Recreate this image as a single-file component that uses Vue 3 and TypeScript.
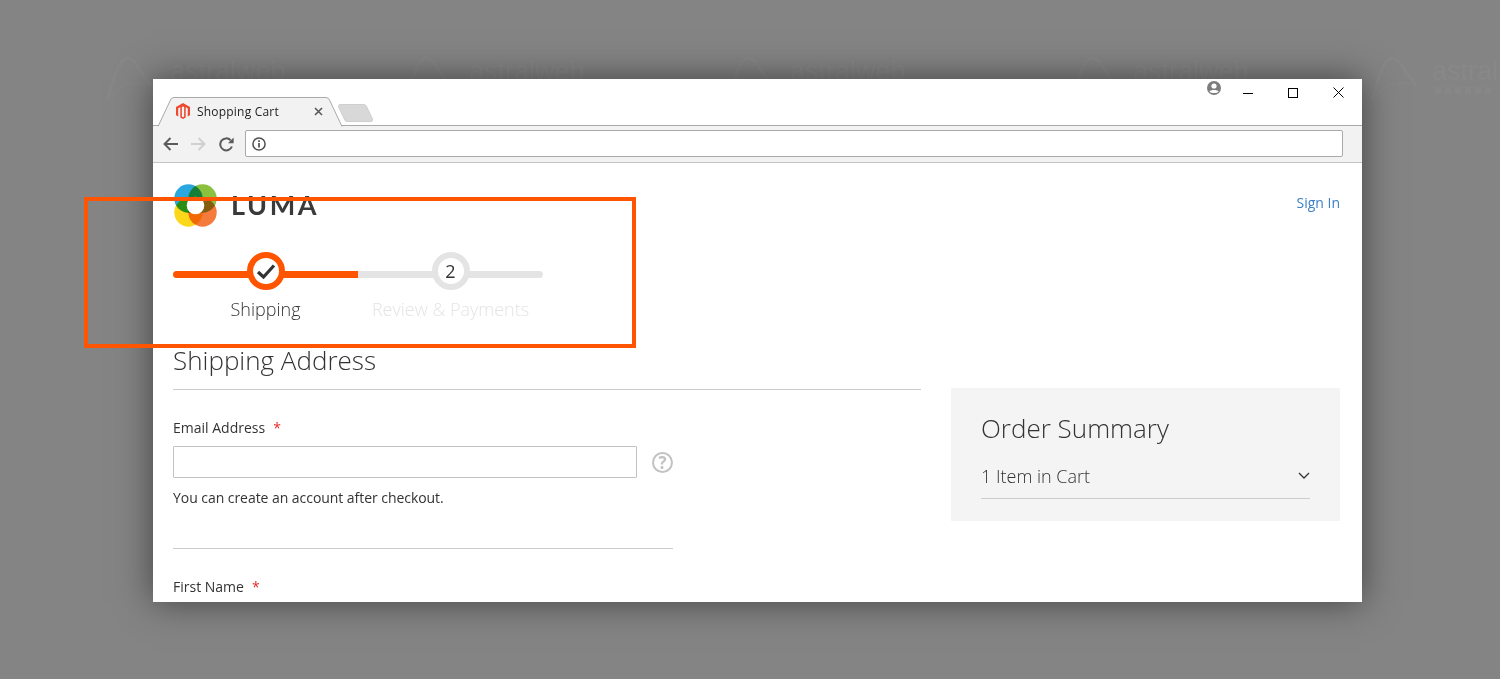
<script setup lang="ts">
const marks: { logo: number; text: number; label: string }[] = [
  { logo: 105, text: 170, label: 'astralweb' },
  { logo: 404, text: 469, label: 'astralweb' },
  { logo: 726, text: 790, label: 'astralweb' },
  { logo: 1070, text: 1133, label: 'astralweb' },
  { logo: 1370, text: 1432, label: 'astral' }
]
</script>

<template>
  <div class="page">
    <template v-for="m in marks" :key="m.text">
      <svg class="mark-logo" :style="{ left: m.logo + 'px' }" width="48" height="66" viewBox="0 0 48 66" fill="none">
        <path d="M2 50 C8 30 14 8 22 8 C30 8 36 24 46 35" stroke="#878787" stroke-width="3" />
        <path d="M4 50 C12 36 26 28 46 36" stroke="#868686" stroke-width="2" />
      </svg>
      <span class="mark-text" :style="{ left: m.text + 'px' }">{{ m.label }}</span>
    </template>
    <div class="mark-sub"></div>

    <section class="window">
      <header class="titlebar">
        <div class="tab">
          <svg class="tab-bg" width="186" height="30" viewBox="0 0 186 30">
            <path d="M0 29.5 L12 4 Q13 .5 16 .5 H168 Q171 .5 172 4 L184 29.5" fill="#f2f2f2" stroke="#a9a9a9" />
          </svg>
          <svg class="favicon" width="14" height="16" viewBox="0 0 15 17">
            <path d="M7.5 0 L15 4.3 V13 L12.6 14.3 V5.6 L10.4 4.4 V15.4 L7.5 17 L4.6 15.4 V4.4 L2.4 5.6 V14.3 L0 13 V4.3 Z M7.5 3.6 L6.3 4.3 V14.5 L7.5 15.2 L8.7 14.5 V4.3 Z" fill="#ec4b32" fill-rule="evenodd" />
          </svg>
          <span class="tab-title">Shopping Cart</span>
          <svg class="tab-close" width="9" height="9" viewBox="0 0 9 9">
            <path d="M1 1 L8 8 M8 1 L1 8" stroke="#5a5a5a" stroke-width="1.6" />
          </svg>
        </div>
        <svg class="new-tab" width="35" height="18" viewBox="0 0 35 18">
          <path d="M2 0.5 H26 Q27.5 .5 28.3 2 L34.5 15 Q35 17.5 33 17.5 H9 Q7.5 17.5 6.8 16 L.6 3 Q0 .5 2 .5 Z" fill="#d8d8d8" stroke="#cfcfcf" />
        </svg>
        <div class="spacer"></div>
        <svg class="profile" width="14" height="14" viewBox="0 0 14 14">
          <circle cx="7" cy="7" r="7" fill="#7d7d7d" />
          <circle cx="7" cy="5" r="2.6" fill="#fff" />
          <path d="M2.4 10.6 C3.4 8.6 10.6 8.6 11.6 10.6 C10 12.6 4 12.6 2.4 10.6 Z" fill="#fff" />
        </svg>
        <div class="controls">
          <svg width="10" height="10" viewBox="0 0 10 10"><path d="M0 5.5 H10" stroke="#000" /></svg>
          <svg width="10" height="10" viewBox="0 0 10 10"><rect x=".5" y=".5" width="9" height="9" fill="none" stroke="#000" /></svg>
          <svg width="11" height="11" viewBox="0 0 11 11"><path d="M.5 .5 L10.5 10.5 M10.5 .5 L.5 10.5" stroke="#000" /></svg>
        </div>
      </header>

      <div class="toolbar">
        <svg width="15" height="14" viewBox="0 0 15 14" fill="none" stroke="#5a5a5a" stroke-width="1.9">
          <path d="M15 7 H2 M7.5 1 L1.5 7 L7.5 13" />
        </svg>
        <svg width="15" height="14" viewBox="0 0 15 14" fill="none" stroke="#cfcfcf" stroke-width="1.9">
          <path d="M0 7 H13 M7.5 1 L13.5 7 L7.5 13" />
        </svg>
        <svg width="15" height="15" viewBox="0 0 15 15" fill="none">
          <path d="M12.9 9.5 A6 6 0 1 1 11.6 3.2" stroke="#5a5a5a" stroke-width="2" />
          <path d="M9 6.2 H14.6 V.6 Z" fill="#5a5a5a" />
        </svg>
        <div class="address">
          <svg width="14" height="14" viewBox="0 0 14 14" fill="none">
            <circle cx="7" cy="7" r="6.1" stroke="#4f4f4f" stroke-width="1.5" />
            <path d="M7 6 V10.6 M7 3.2 V4.9" stroke="#4f4f4f" stroke-width="1.7" />
          </svg>
        </div>
      </div>

      <main class="content">
        <div class="site-head">
          <div class="logo">
            <svg class="logo-mark" width="43" height="43" viewBox="0 0 44 44">
              <g class="blend">
                <circle cx="14.8" cy="14.8" r="14.5" fill="#2aa7df" />
                <circle cx="29.2" cy="14.8" r="14.5" fill="#8cc03f" />
                <circle cx="14.8" cy="29.2" r="14.5" fill="#fdd719" />
                <circle cx="29.2" cy="29.2" r="14.5" fill="#f47b3c" />
              </g>
              <circle cx="22" cy="22" r="9" fill="#fff" />
            </svg>
            <span class="logo-text">LUMA</span>
          </div>
          <a class="sign-in">Sign In</a>
        </div>

        <ol class="steps">
          <li class="step done">
            <span class="badge">
              <svg width="20" height="17" viewBox="0 0 20 17" fill="none">
                <path d="M2 9 L7.5 14 L18 2.5" stroke="#333" stroke-width="3.2" />
              </svg>
            </span>
            <span class="step-label">Shipping</span>
          </li>
          <li class="step">
            <span class="badge"><span class="num">2</span></span>
            <span class="step-label">Review &amp; Payments</span>
          </li>
        </ol>

        <div class="columns">
          <form class="form" @submit.prevent>
            <h2 class="title">Shipping Address</h2>
            <div class="field-wrap">
              <label class="label" for="email">Email Address<i>*</i></label>
              <div class="input-row">
                <input id="email" class="input" type="text" />
                <span class="help">?</span>
              </div>
              <p class="note">You can create an account after checkout.</p>
              <div class="divider"></div>
              <label class="label" for="first">First Name<i>*</i></label>
            </div>
          </form>

          <aside class="summary">
            <h2 class="summary-title">Order Summary</h2>
            <div class="summary-row">
              <span>1 Item in Cart</span>
              <svg width="12" height="7" viewBox="0 0 12 7" fill="none">
                <path d="M1 1 L6 6 L11 1" stroke="#333" stroke-width="1.3" />
              </svg>
            </div>
          </aside>
        </div>
      </main>
    </section>

    <div class="highlight"></div>
  </div>
</template>

<style>
html, body { margin: 0; background: #848484; }
</style>

<style scoped>
* { box-sizing: border-box; }
.page {
  position: relative;
  width: 1500px;
  height: 679px;
  padding: 79px 138px 0 153px;
  background: #848484;
  overflow: hidden;
  font-family: "Open Sans", "Noto Sans", sans-serif;
  color: #333;
}
.mark-logo { position: absolute; top: 50px; }
.mark-text {
  position: absolute;
  top: 56px;
  font-family: "Liberation Sans", sans-serif;
  font-size: 27px;
  line-height: 30px;
  color: #888888;
}
.mark-sub {
  position: absolute;
  left: 1435px;
  top: 87px;
  width: 58px;
  height: 7px;
  background: repeating-linear-gradient(90deg, #878787 0 6px, transparent 6px 10px);
}
.window {
  position: relative;
  width: 1209px;
  height: 523px;
  background: #fff;
  box-shadow: 0 0 34px rgba(0, 0, 0, 0.5);
  overflow: hidden;
}
.titlebar {
  display: flex;
  align-items: flex-start;
  height: 47px;
  border-bottom: 1px solid #a9a9a9;
  padding-left: 5px;
}
.tab {
  position: relative;
  display: flex;
  align-items: center;
  width: 186px;
  height: 30px;
  margin-top: 18px;
  padding: 0 18px 2px 18px;
}
.tab-bg { position: absolute; left: 0; top: 0; }
.favicon, .tab-title, .tab-close { position: relative; }
.tab-title {
  margin-left: 7px;
  font-family: "Open Sans", sans-serif;
  font-size: 12px;
  letter-spacing: 0.2px;
  color: #222;
}
.tab-close { margin-left: auto; margin-right: 3px; }
.new-tab { margin: 25px 0 0 -6px; }
.spacer { flex: 1; }
.profile { margin: 2px 22px 0 0; }
.controls {
  display: flex;
  align-items: center;
  gap: 35px;
  margin: 8px 18px 0 0;
}
.toolbar {
  display: flex;
  align-items: center;
  gap: 13px;
  height: 37px;
  padding: 0 19px 0 10px;
  background: #f2f2f2;
  border-bottom: 1px solid #c4c4c4;
}
.address {
  display: flex;
  align-items: center;
  flex: 1;
  height: 27px;
  margin: -1px 0 0 -2px;
  padding-left: 6px;
  background: #fff;
  border: 1px solid #a9a9a9;
  border-radius: 2px;
}
.content { padding: 20px 22px 0 20px; }
.site-head {
  display: flex;
  justify-content: space-between;
  height: 44px;
}
.logo { display: flex; align-items: center; }
.logo-mark { margin-left: 1px; }
.blend { isolation: isolate; }
.blend circle { mix-blend-mode: multiply; }
.logo-text {
  margin-left: 14px;
  font-family: "Lato", sans-serif;
  font-size: 27px;
  font-weight: 700;
  letter-spacing: 2.6px;
  line-height: 44px;
  color: #3a3a3a;
}
.sign-in {
  margin-top: 10px;
  font-size: 14px;
  line-height: 20px;
  color: #3b7fc4;
}
.steps {
  display: flex;
  margin: 25px 0 0;
  padding: 0;
  list-style: none;
}
.step {
  position: relative;
  display: flex;
  flex-direction: column;
  align-items: center;
  width: 185px;
}
.step::before {
  content: "";
  position: absolute;
  left: 0;
  right: 0;
  top: 19px;
  height: 7px;
  background: #e4e4e4;
}
.step:first-child::before { border-radius: 4px 0 0 4px; }
.step:last-child::before { border-radius: 0 4px 4px 0; }
.step.done::before { background: #ff5501; }
.badge {
  position: relative;
  display: flex;
  align-items: center;
  justify-content: center;
  width: 38px;
  height: 38px;
  background: #fff;
  border: 6px solid #e4e4e4;
  border-radius: 50%;
}
.done .badge { border-color: #ff5501; }
.num { font-size: 18px; font-weight: 500; line-height: 1; color: #333; }
.step-label {
  margin-top: 6px;
  font-size: 18px;
  font-weight: 300;
  line-height: 26px;
  color: #e4e4e4;
}
.done .step-label { color: #333; }
.columns {
  display: flex;
  justify-content: space-between;
  align-items: flex-start;
  margin-top: 20px;
}
.form { width: 748px; }
.title {
  margin: 0;
  height: 48px;
  font-size: 26px;
  font-weight: 300;
  line-height: 36px;
  border-bottom: 1px solid #ccc;
}
.field-wrap { width: 500px; padding-top: 28px; }
.label {
  display: block;
  font-size: 14px;
  line-height: 20px;
  color: #333;
}
.label i {
  margin-left: 8px;
  font-style: normal;
  color: #e02b27;
  font-size: 14px;
}
.input-row {
  display: flex;
  align-items: center;
  justify-content: space-between;
  margin-top: 8px;
}
.input {
  display: block;
  width: 464px;
  height: 32px;
  padding: 0 9px;
  background: #fff;
  border: 1px solid #c2c2c2;
  border-radius: 1px;
  outline: none;
}
.help {
  display: flex;
  align-items: center;
  justify-content: center;
  width: 21px;
  height: 21px;
  border: 2px solid #c2c2c2;
  border-radius: 50%;
  font-size: 17px;
  font-weight: 700;
  line-height: 1;
  color: #c2c2c2;
}
.note {
  margin: 10px 0 0;
  font-size: 14px;
  line-height: 20px;
  letter-spacing: -0.05px;
}
.divider {
  height: 1px;
  margin: 40px 0 28px;
  background: #ccc;
}
.summary {
  width: 389px;
  height: 133px;
  margin-top: 46px;
  padding: 22px 30px 0;
  background: #f4f4f4;
}
.summary-title {
  margin: 0;
  font-size: 26px;
  font-weight: 300;
  line-height: 36px;
}
.summary-row {
  display: flex;
  align-items: center;
  justify-content: space-between;
  height: 45px;
  margin-top: 8px;
  padding-bottom: 1px;
  border-bottom: 1px solid #ccc;
  font-size: 18px;
  font-weight: 300;
  line-height: 24px;
}
.highlight {
  position: absolute;
  left: 84px;
  top: 197px;
  width: 552px;
  height: 151px;
  border: 4px solid #ff5501;
  pointer-events: none;
}
</style>
